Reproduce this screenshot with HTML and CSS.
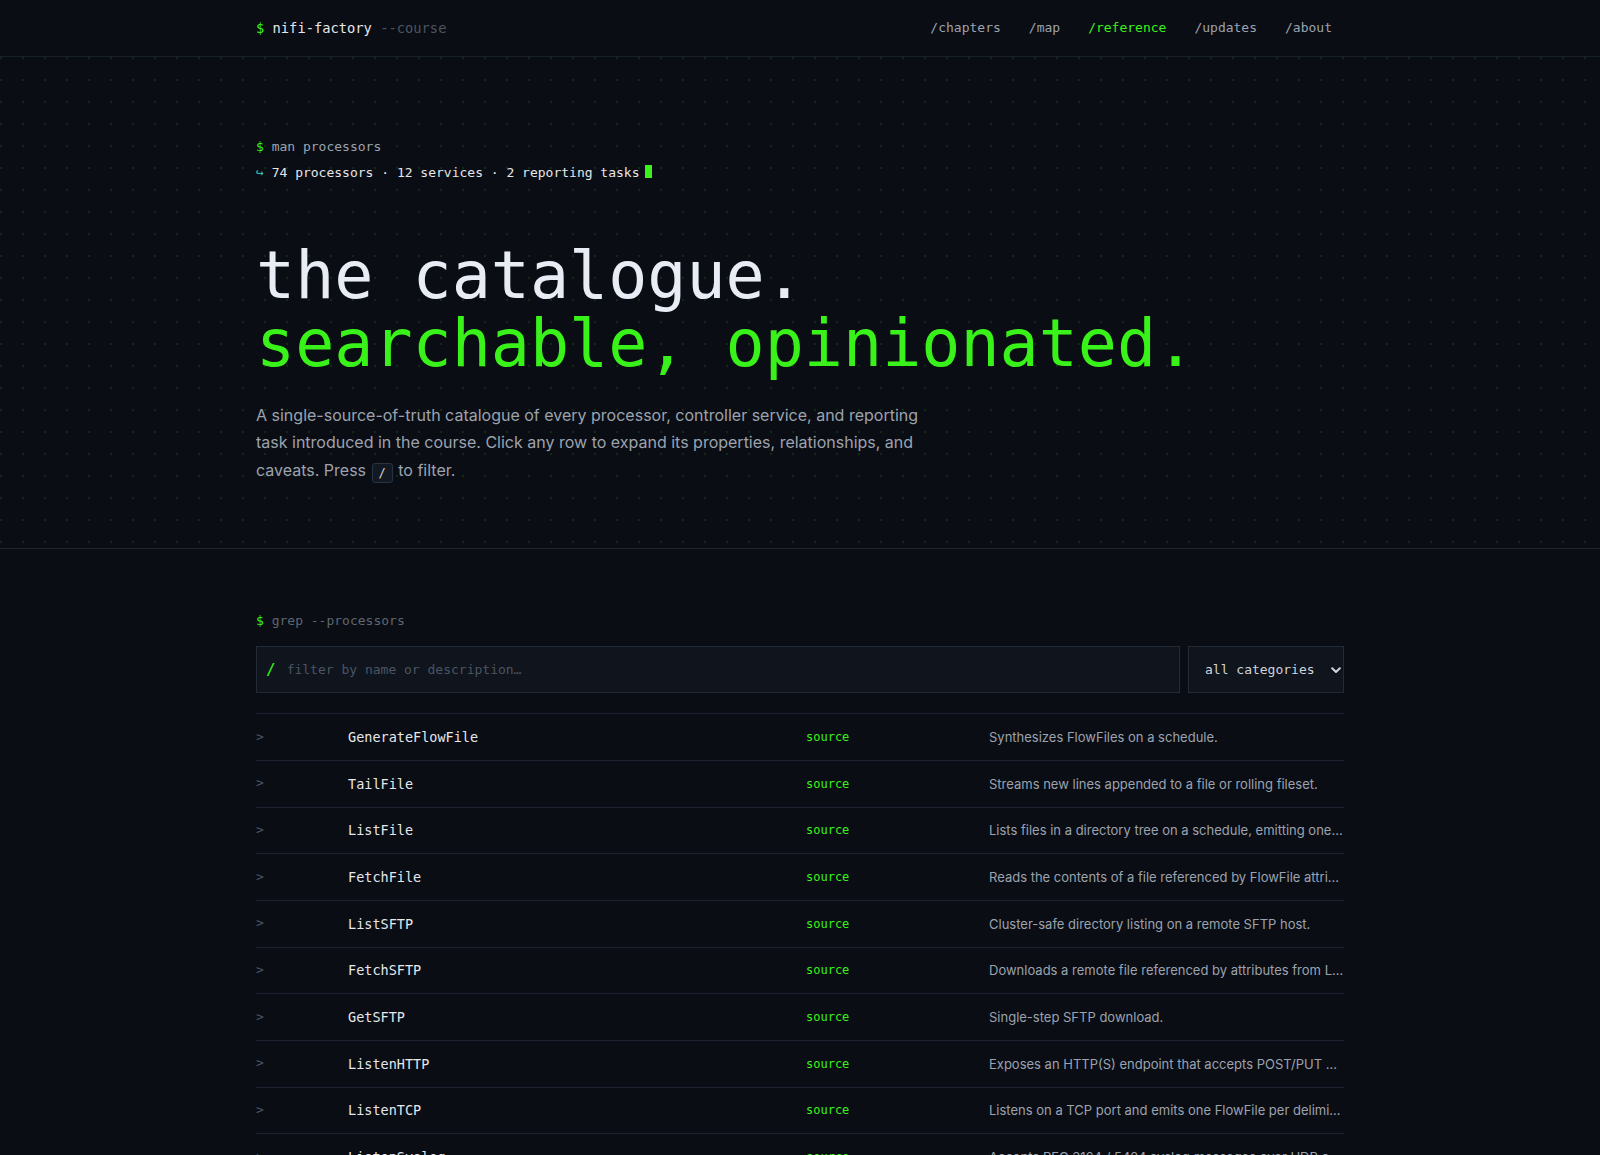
FILE: index.html
```html
<!DOCTYPE html>
<html lang="en">
<head>
<meta charset="utf-8">
<title>nifi-factory — reference</title>
<link rel="stylesheet" href="styles.css">
</head>
<body>
<header class="site-header">
  <div class="container header-inner">
    <a class="brand" href="#"><span class="prompt">$</span> nifi-factory <span class="brand-flag">--course</span></a>
    <nav class="nav">
      <a href="#">/chapters</a>
      <a href="#">/map</a>
      <a href="#" class="active">/reference</a>
      <a href="#">/updates</a>
      <a href="#">/about</a>
    </nav>
  </div>
</header>

<section class="hero">
  <div class="container">
    <div class="cmd">
      <div class="cmd-line"><span class="prompt">$</span> man processors</div>
      <div class="cmd-out"><span class="arrow">↪</span> 74 processors · 12 services · 2 reporting tasks<span class="cursor"></span></div>
    </div>
    <h1 class="headline"><span class="hl-white">the catalogue.</span><span class="hl-green">searchable, opinionated.</span></h1>
    <p class="lede">A single-source-of-truth catalogue of every processor, controller service, and reporting task introduced in the course. Click any row to expand its properties, relationships, and caveats. Press <kbd>/</kbd> to filter.</p>
  </div>
</section>

<section class="catalogue">
  <div class="container">
    <div class="section-cmd"><span class="prompt">$</span> grep --processors</div>
    <div class="filters">
      <label class="search"><span class="search-slash">/</span><input type="text" placeholder="filter by name or description…"></label>
      <div class="select-wrap">
        <select><option>all categories</option></select>
        <svg class="chev" width="10" height="7" viewBox="0 0 10 7"><path d="M1.2 1.3 L5 5 L8.8 1.3" fill="none" stroke="#d1d5db" stroke-width="2" stroke-linecap="round" stroke-linejoin="round"/></svg>
      </div>
    </div>
    <div class="table">
      <div class="row"><span class="caret">&gt;</span><span class="name">GenerateFlowFile</span><span class="cat">source</span><span class="desc">Synthesizes FlowFiles on a schedule.</span></div>
      <div class="row"><span class="caret">&gt;</span><span class="name">TailFile</span><span class="cat">source</span><span class="desc">Streams new lines appended to a file or rolling fileset.</span></div>
      <div class="row"><span class="caret">&gt;</span><span class="name">ListFile</span><span class="cat">source</span><span class="desc">Lists files in a directory tree on a schedule, emitting one FlowFile per file.</span></div>
      <div class="row"><span class="caret">&gt;</span><span class="name">FetchFile</span><span class="cat">source</span><span class="desc">Reads the contents of a file referenced by FlowFile attributes.</span></div>
      <div class="row"><span class="caret">&gt;</span><span class="name">ListSFTP</span><span class="cat">source</span><span class="desc">Cluster-safe directory listing on a remote SFTP host.</span></div>
      <div class="row"><span class="caret">&gt;</span><span class="name">FetchSFTP</span><span class="cat">source</span><span class="desc">Downloads a remote file referenced by attributes from ListSFTP.</span></div>
      <div class="row"><span class="caret">&gt;</span><span class="name">GetSFTP</span><span class="cat">source</span><span class="desc">Single-step SFTP download.</span></div>
      <div class="row"><span class="caret">&gt;</span><span class="name">ListenHTTP</span><span class="cat">source</span><span class="desc">Exposes an HTTP(S) endpoint that accepts POST/PUT with the body as FlowFile content.</span></div>
      <div class="row"><span class="caret">&gt;</span><span class="name">ListenTCP</span><span class="cat">source</span><span class="desc">Listens on a TCP port and emits one FlowFile per delimited message.</span></div>
      <div class="row"><span class="caret">&gt;</span><span class="name">ListenSyslog</span><span class="cat">source</span><span class="desc">Accepts RFC 3164 / 5424 syslog messages over UDP or TCP.</span></div>
      <div class="row"><span class="caret">&gt;</span><span class="name">ListenUDP</span><span class="cat">source</span><span class="desc">Listens for datagrams on a UDP port.</span></div>
    </div>
  </div>
</section>
</body>
</html>
```

FILE: styles.css
```css
:root {
  --bg: #0a0d14;
  --panel: #0f141d;
  --line: #1c2330;
  --green: #39f21a;
  --mono: "DejaVu Sans Mono", "Liberation Mono", monospace;
  --sans: "Inter", "Noto Sans", sans-serif;
}

* { box-sizing: border-box; }

html, body {
  margin: 0;
  background: var(--bg);
  color: #e5e7eb;
  font-family: var(--sans);
}

a { text-decoration: none; color: inherit; }

.container {
  max-width: 1088px;
  margin: 0 auto;
}

.prompt { color: var(--green); }

/* header */
.site-header {
  border-bottom: 1px solid #19202b;
}
.header-inner {
  height: 56px;
  display: flex;
  align-items: center;
  justify-content: space-between;
}
.brand {
  font-family: var(--mono);
  font-size: 13.75px;
  color: #e5e7eb;
  white-space: pre;
}
.brand-flag { color: #4b5563; }
.nav {
  display: flex;
  gap: 4px;
}
.nav a {
  font-family: var(--mono);
  font-size: 13px;
  color: #9ca3af;
  padding: 3px 12px 5px;
}
.nav a.active { color: var(--green); }

/* hero */
.hero {
  border-bottom: 1px solid #1f2430;
  padding: 77px 0 64px;
  background-image: radial-gradient(circle at 1px 1px, rgba(57, 242, 26, 0.13) 1px, transparent 1.6px);
  background-size: 22px 22px;
  background-position: 0 0;
}
.cmd {
  font-family: var(--mono);
  font-size: 13px;
  line-height: 26px;
}
.cmd-line { color: #9ca3af; }
.cmd-out { color: #e5e7eb; }
.arrow { color: #2ec4b6; }
.cursor {
  display: inline-block;
  width: 7px;
  height: 13px;
  background: var(--green);
  margin-left: 5px;
  vertical-align: -1px;
}
.headline {
  margin: 56px 0 0;
  font-family: var(--mono);
  font-weight: 400;
  font-size: 65px;
  line-height: 68.4px;
}
.headline span { display: block; }
.hl-white { color: #e8edf5; }
.hl-green { color: var(--green); }

.lede {
  margin: 23px 0 0;
  max-width: 672px;
  font-size: 16px;
  line-height: 27.5px;
  color: #9ca3af;
}
kbd {
  display: inline-block;
  font-family: var(--mono);
  font-size: 12px;
  line-height: 18px;
  padding: 0 6px;
  margin: 0 1px;
  color: #d1d5db;
  background: #131922;
  border: 1px solid #2a3340;
  border-radius: 3px;
  vertical-align: -1px;
}

/* catalogue */
.catalogue { padding-top: 62px; }
.section-cmd {
  font-family: var(--mono);
  font-size: 13px;
  line-height: 20px;
  color: #5f6773;
  margin-bottom: 15px;
}
.filters {
  display: flex;
  gap: 8px;
  height: 47px;
  margin-bottom: 20px;
}
.search {
  flex: 1;
  display: flex;
  align-items: center;
  gap: 11px;
  padding: 0 9px;
  background: var(--panel);
  border: 1px solid #232b37;
}
.search-slash {
  color: var(--green);
  font-family: var(--mono);
  font-size: 16px;
}
.search input {
  flex: 1;
  background: transparent;
  border: none;
  outline: none;
  font-family: var(--mono);
  font-size: 13px;
  color: #e5e7eb;
  padding: 0;
}
.search input::placeholder { color: #4b5563; }

.select-wrap {
  position: relative;
  width: 156px;
}
.select-wrap select {
  appearance: none;
  -webkit-appearance: none;
  width: 100%;
  height: 100%;
  background: var(--panel);
  border: 1px solid #232b37;
  border-radius: 0;
  color: #d1d5db;
  font-family: var(--mono);
  font-size: 13px;
  padding: 0 16px;
  outline: none;
}
.chev {
  position: absolute;
  right: 3px;
  top: 50%;
  margin-top: -3px;
  pointer-events: none;
}

.table { border-bottom: 1px solid var(--line); }
.row {
  display: grid;
  grid-template-columns: 92px 458px 183px minmax(0, 1fr);
  align-items: center;
  height: 46.67px;
  border-top: 1px solid var(--line);
}
.caret {
  font-family: var(--mono);
  font-size: 13px;
  color: #4b5563;
  margin-top: -2px;
}
.name {
  font-family: var(--mono);
  font-size: 13.5px;
  color: #e5e7eb;
}
.cat {
  font-family: var(--mono);
  font-size: 12px;
  color: var(--green);
}
.desc {
  font-size: 13px;
  color: #9ca3af;
  white-space: nowrap;
  overflow: hidden;
  text-overflow: ellipsis;
}
```
